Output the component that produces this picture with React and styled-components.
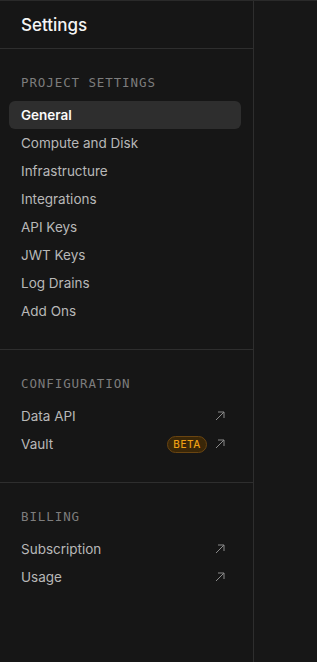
import React from "react";
import styled, { createGlobalStyle } from "styled-components";

const GlobalStyle = createGlobalStyle`
  html, body {
    margin: 0;
    padding: 0;
    background: #171717;
  }
  body {
    font-family: Inter, "Noto Sans", sans-serif;
    -webkit-font-smoothing: antialiased;
  }
`;

const sections = [
  {
    title: "Project Settings",
    items: [
      { label: "General", active: true },
      { label: "Compute and Disk" },
      { label: "Infrastructure" },
      { label: "Integrations" },
      { label: "API Keys" },
      { label: "JWT Keys" },
      { label: "Log Drains" },
      { label: "Add Ons" },
    ],
  },
  {
    title: "Configuration",
    items: [
      { label: "Data API", external: true },
      { label: "Vault", external: true, badge: "Beta" },
    ],
  },
  {
    title: "Billing",
    items: [
      { label: "Subscription", external: true },
      { label: "Usage", external: true },
    ],
  },
];

const ExternalIcon = () => (
  <svg width="10" height="10" viewBox="0 0 10 10" fill="none">
    <path d="M1 9L9 1M3 1H9V7" stroke="#8a8a8a" strokeWidth="1" />
  </svg>
);

const App = () => {
  return (
    <>
      <GlobalStyle />
      <Page>
        <Sidebar>
          <Header>
            <Title>Settings</Title>
          </Header>
          {sections.map((section) => (
            <Section key={section.title}>
              <SectionTitle>{section.title}</SectionTitle>
              <Menu>
                {section.items.map((item) => (
                  <Item key={item.label} $active={item.active}>
                    <span>{item.label}</span>
                    {item.external && (
                      <Trail>
                        {item.badge && <Badge>{item.badge}</Badge>}
                        <ExternalIcon />
                      </Trail>
                    )}
                  </Item>
                ))}
              </Menu>
            </Section>
          ))}
        </Sidebar>
        <Content />
      </Page>
    </>
  );
};

export default App;

const Page = styled.div`
  display: flex;
  height: 662px;
  border-top: 1px solid #2a2a2a;
  box-sizing: border-box;
  background: #171717;
`;

const Sidebar = styled.aside`
  width: 253px;
  flex-shrink: 0;
  border-right: 1px solid #2e2e2e;
  background: #161616;
  display: flex;
  flex-direction: column;
`;

const Header = styled.div`
  height: 47px;
  display: flex;
  align-items: center;
  padding: 0 21px;
  border-bottom: 1px solid #2e2e2e;
`;

const Title = styled.h1`
  margin: 0;
  font-size: 17px;
  font-weight: 500;
  color: #f5f5f5;
`;

const Section = styled.div`
  padding: 26px 12px 24px 9px;
  border-bottom: 1px solid #2e2e2e;

  &:last-child {
    border-bottom: none;
  }
`;

const SectionTitle = styled.div`
  font-family: "DejaVu Sans Mono", "Liberation Mono", monospace;
  font-size: 12.5px;
  line-height: 16px;
  letter-spacing: 0.9px;
  text-transform: uppercase;
  color: #7d7d7d;
  padding-left: 12px;
  margin-bottom: 10px;
`;

const Menu = styled.div`
  display: flex;
  flex-direction: column;
`;

const Item = styled.div`
  height: 28px;
  display: flex;
  align-items: center;
  justify-content: space-between;
  padding: 0 16px 0 12px;
  border-radius: 6px;
  font-size: 13.5px;
  font-weight: ${(p) => (p.$active ? 600 : 400)};
  color: ${(p) => (p.$active ? "#fafafa" : "#b8b8b8")};
  background: ${(p) => (p.$active ? "#2e2e2e" : "transparent")};
`;

const Trail = styled.div`
  display: flex;
  align-items: center;
  gap: 8px;
`;

const Badge = styled.span`
  display: inline-flex;
  align-items: center;
  height: 15px;
  padding: 0 5px;
  border-radius: 999px;
  border: 1px solid #6a4511;
  background: #3a2708;
  color: #f0a114;
  font-size: 10px;
  font-weight: 500;
  letter-spacing: 0.6px;
  text-transform: uppercase;
`;

const Content = styled.main`
  flex: 1;
  background: #171717;
`;
